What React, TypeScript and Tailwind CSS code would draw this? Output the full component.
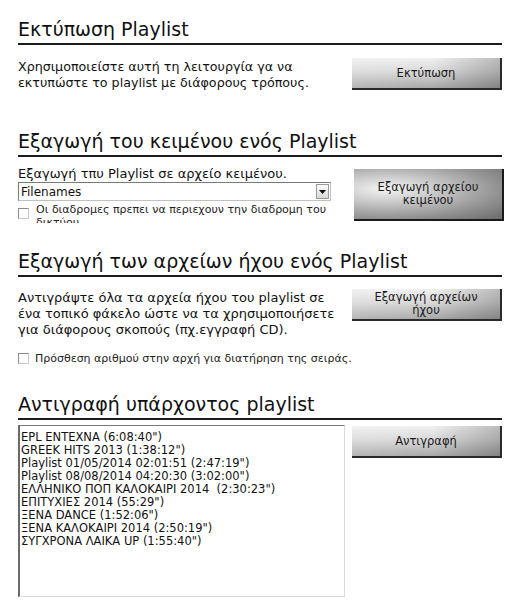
import React from 'react'

const font = { fontFamily: '"DejaVu Sans", Verdana, sans-serif' }

const playlists = [
  'EPL ENTEXNA (6:08:40")',
  'GREEK HITS 2013 (1:38:12")',
  'Playlist 01/05/2014 02:01:51 (2:47:19")',
  'Playlist 08/08/2014 04:20:30 (3:02:00")',
  'ΕΛΛΗΝΙΚΟ ΠΟΠ ΚΑΛΟΚΑΙΡΙ 2014  (2:30:23")',
  'ΕΠΙΤΥΧΙΕΣ 2014 (55:29")',
  'ΞΕΝΑ DANCE (1:52:06")',
  'ΞΕΝΑ ΚΑΛΟΚΑΙΡΙ 2014 (2:50:19")',
  'ΣΥΓΧΡΟΝΑ ΛΑΙΚΑ UP (1:55:40")',
]

function Heading({ children }: { children: React.ReactNode }) {
  return (
    <div className="border-b-2 border-[#1c1c1c] pb-[2px] text-[19px] leading-[24px] text-[#111]">
      {children}
    </div>
  )
}

function GrayButton({ children, className = '' }: { children: React.ReactNode; className?: string }) {
  return (
    <button
      className={`flex h-[32px] w-[150px] shrink-0 items-center justify-center border-b-2 border-r-2 border-[#2a2a2a] bg-[linear-gradient(to_right,rgba(255,255,255,0.15),rgba(255,255,255,0)_55%,rgba(0,0,0,0.22)),linear-gradient(to_bottom,#f0f0f0_0%,#d8d8d8_45%,#a8a8a8_100%)] text-[11.5px] leading-[13px] text-[#1a1a1a] ${className}`}
    >
      {children}
    </button>
  )
}

function CheckBox() {
  return (
    <span className="block h-[11px] w-[11px] shrink-0 border border-t-[#8a8a8a] border-l-[#8a8a8a] border-r-[#c8c8c8] border-b-[#c8c8c8] bg-white" />
  )
}

export default function App() {
  return (
    <div className="h-[616px] w-[517px] overflow-hidden bg-white pl-[18px] pr-[15px] pt-[17px]" style={font}>
      {/* print */}
      <Heading>Εκτύπωση Playlist</Heading>
      <div className="mt-[13px] flex justify-between">
        <p className="pt-[1px] text-[12.7px] leading-[16px] text-[#111]">
          Χρησιμοποιείστε αυτή τη λειτουργία γα να
          <br />
          εκτυπώστε το playlist με διάφορους τρόπους.
        </p>
        <GrayButton>Εκτύπωση</GrayButton>
      </div>

      {/* export text */}
      <div className="mt-[38px]">
        <Heading>Εξαγωγή του κειμένου ενός Playlist</Heading>
      </div>
      <div className="mt-[10px] flex justify-between">
        <div className="w-[313px]">
          <p className="text-[13px] leading-[14px] text-[#111]">Εξαγωγή τπυ Playlist σε αρχείο κειμένου.</p>
          <div className="mt-[1px] flex h-[19px] items-center justify-between border border-t-[#7a7a7a] border-l-[#7a7a7a] border-r-[#c0c0c0] border-b-[#c0c0c0] bg-white pl-[2px] pr-[1px]">
            <span className="text-[12px] leading-[14px] text-[#111]">Filenames</span>
            <span className="flex h-[15px] w-[13px] items-center justify-center border border-[#9a9a9a] bg-[linear-gradient(to_bottom,#fdfdfd,#d8d8d8)]">
              <svg width="7" height="4" viewBox="0 0 7 4">
                <path d="M0 0h7L3.5 4z" fill="#111" />
              </svg>
            </span>
          </div>
          <div className="mt-[4px] flex h-[18px] overflow-hidden">
            <div className="mt-[3px] shrink-0">
              <CheckBox />
            </div>
            <p className="-mt-[2px] ml-[7px] text-[11px] leading-[13px] text-[#222]">
              Οι διαδρομες πρεπει να περιεχουν την διαδρομη του δικτύου.
            </p>
          </div>
        </div>
        <button className="mr-[-2px] mt-[2px] flex h-[52px] w-[150px] shrink-0 flex-col items-center justify-center border-b-2 border-r-2 border-[#1a1a1a] bg-[radial-gradient(ellipse_at_22%_40%,#f4f4f4_0%,#c8c8c8_32%,#939393_68%,#6a6a6a_100%)] text-[11.5px] leading-[13px] text-[#1a1a1a]">
          <span>Εξαγωγή αρχείου</span>
          <span>κειμένου</span>
        </button>
      </div>

      {/* export audio */}
      <div className="mt-[26px]">
        <Heading>Εξαγωγή των αρχείων ήχου ενός Playlist</Heading>
      </div>
      <div className="mt-[12px] flex justify-between">
        <p className="pt-[1px] text-[13px] leading-[16px] text-[#111]">
          Αντιγράψτε όλα τα αρχεία ήχου του playlist σε
          <br />
          ένα τοπικό φάκελο ώστε να τα χρησιμοποιήσετε
          <br />
          για διάφορους σκοπούς (πχ.εγγραφή CD).
        </p>
        <GrayButton className="flex-col">
          <span>Εξαγωγή αρχείων</span>
          <span>ήχου</span>
        </GrayButton>
      </div>
      <div className="mt-[14px] flex items-center gap-[6px]">
        <CheckBox />
        <span className="text-[11px] leading-[13px] text-[#222]">Πρόσθεση αριθμού στην αρχή για διατήρηση της σειράς.</span>
      </div>

      {/* copy existing */}
      <div className="mt-[27px]">
        <Heading>Αντιγραφή υπάρχοντος playlist</Heading>
      </div>
      <div className="mt-[5px] flex justify-between">
        <div className="h-[172px] w-[327px] border border-l-2 border-t-[#7a7a7a] border-l-[#6a6a6a] border-r-[#dadada] border-b-[#dadada] bg-white pl-[1px] pt-[5px]">
          {playlists.map((p) => (
            <div key={p} className="whitespace-pre text-[11.5px] leading-[13px] text-[#111]">
              {p}
            </div>
          ))}
        </div>
        <GrayButton className="mt-[1px]">Αντιγραφή</GrayButton>
      </div>
    </div>
  )
}
